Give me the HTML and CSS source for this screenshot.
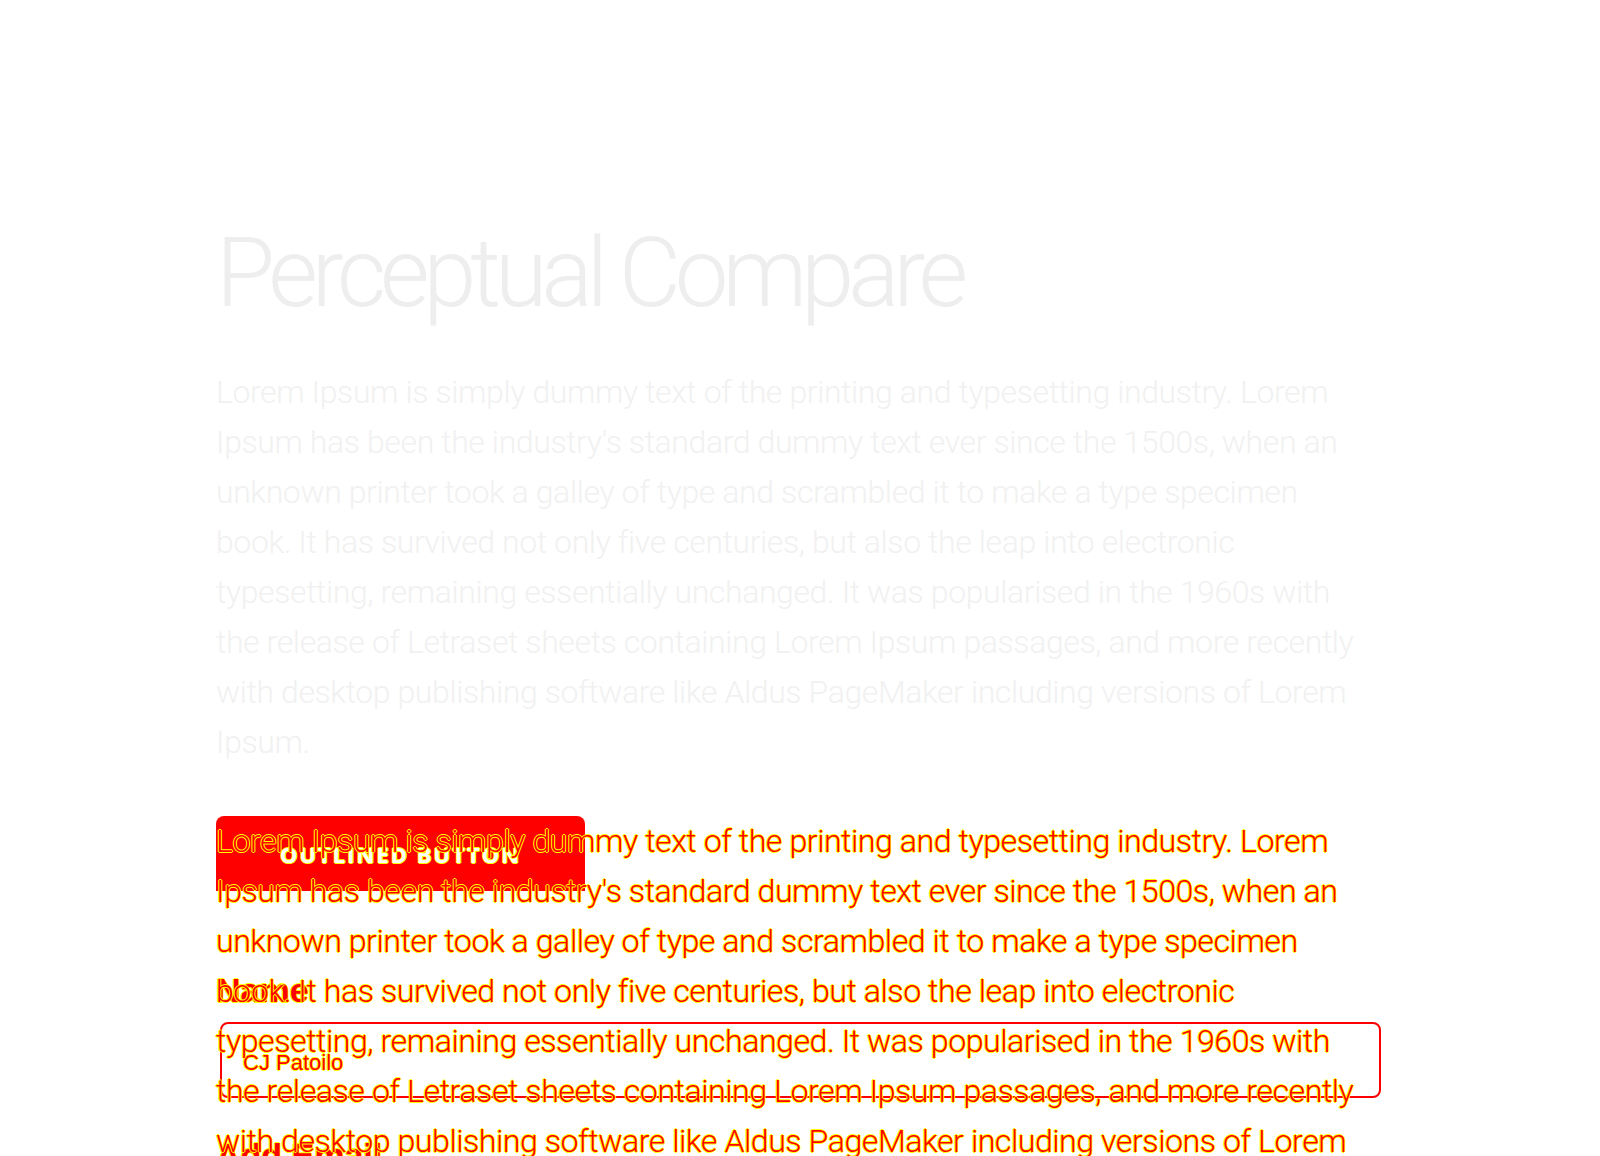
FILE: index.html
```html
<!DOCTYPE html>
<html lang="en">
<head>
<meta charset="utf-8">
<title>Perceptual Compare</title>
<link rel="stylesheet" href="styles.css">
</head>
<body>
<main class="page">
  <h1 class="title">Perceptual Compare</h1>
  <p class="lorem">Lorem Ipsum is simply dummy text of the printing and typesetting industry. Lorem<br>Ipsum has been the industry's standard dummy text ever since the 1500s, when an<br>unknown printer took a galley of type and scrambled it to make a type specimen<br>book. It has survived not only five centuries, but also the leap into electronic<br>typesetting, remaining essentially unchanged. It was popularised in the 1960s with<br>the release of Letraset sheets containing Lorem Ipsum passages, and more recently<br>with desktop publishing software like Aldus PageMaker including versions of Lorem<br>Ipsum.</p>
  <section class="diff">
    <button class="btn" type="button">Outlined Button</button>
    <label class="label label-name" for="name">Name</label>
    <div class="input" id="name">CJ Patoilo</div>
    <div class="label label-email">Add Email</div>
    <p class="lorem lorem-diff">Lorem Ipsum is simply dummy text of the printing and typesetting industry. Lorem<br>Ipsum has been the industry's standard dummy text ever since the 1500s, when an<br>unknown printer took a galley of type and scrambled it to make a type specimen<br>book. It has survived not only five centuries, but also the leap into electronic<br>typesetting, remaining essentially unchanged. It was popularised in the 1960s with<br>the release of Letraset sheets containing Lorem Ipsum passages, and more recently<br>with desktop publishing software like Aldus PageMaker including versions of Lorem<br>Ipsum.</p>
  </section>
</main>
</body>
</html>
```
FILE: styles.css
```css
html, body {
  margin: 0;
  padding: 0;
  background: #ffffff;
  overflow: hidden;
}

.page {
  width: 1168px;
  margin: 0 auto;
  padding-top: 225px;
  font-family: Roboto, "Liberation Sans", sans-serif;
}

.title {
  margin: 0;
  font-size: 96px;
  line-height: 96px;
  font-weight: 300;
  letter-spacing: -6.3px;
  color: #eeeeee;
  white-space: nowrap;
}

.lorem {
  margin: 46px 0 0;
  font-size: 32px;
  line-height: 50px;
  font-weight: 300;
  letter-spacing: -0.4px;
  color: #f1f1f1;
  white-space: nowrap;
}

.diff {
  position: relative;
  margin-top: 49px;
  display: flex;
  flex-direction: column;
  align-items: flex-start;
}

.btn {
  width: 369px;
  height: 75px;
  border: none;
  border-radius: 8px 8px 0 0;
  background: #ff0000;
  color: #ffffff;
  font-family: "Open Sans", "Liberation Sans", sans-serif;
  font-weight: 700;
  font-size: 22px;
  letter-spacing: 2px;
  text-transform: uppercase;
  padding: 0;
  text-shadow: 1px 0 #ffff00, -1px 0 #ffff00, 0 1px #ffff00, 0 -1px #ffff00;
}

.label {
  display: block;
  font-family: "Liberation Sans", Arial, sans-serif;
  font-weight: 700;
  font-size: 34px;
  line-height: 40px;
  color: #ff0000;
  text-shadow: 1px 0 #ffff00, -1px 0 #ffff00, 0 1px #ffff00, 0 -1px #ffff00;
}

.label-name {
  margin-top: 79px;
}

.input {
  box-sizing: border-box;
  margin: 12px 0 0 4px;
  width: 1161px;
  height: 76px;
  border: 2px solid #ff0000;
  border-radius: 8px;
  padding: 5px 0 0 21px;
  display: flex;
  align-items: center;
  font-family: "Liberation Sans", Arial, sans-serif;
  font-size: 22px;
  color: #ff0000;
  text-shadow: 1px 0 #ffff00, -1px 0 #ffff00, 0 1px #ffff00, 0 -1px #ffff00;
}

.label-email {
  margin-top: 37px;
}

.lorem-diff {
  position: absolute;
  top: 0;
  left: 0;
  margin: 0;
  color: #ff0000;
  text-shadow: 1px 0 #ffff00, -1px 0 #ffff00, 0 1px #ffff00, 0 -1px #ffff00;
}
```
